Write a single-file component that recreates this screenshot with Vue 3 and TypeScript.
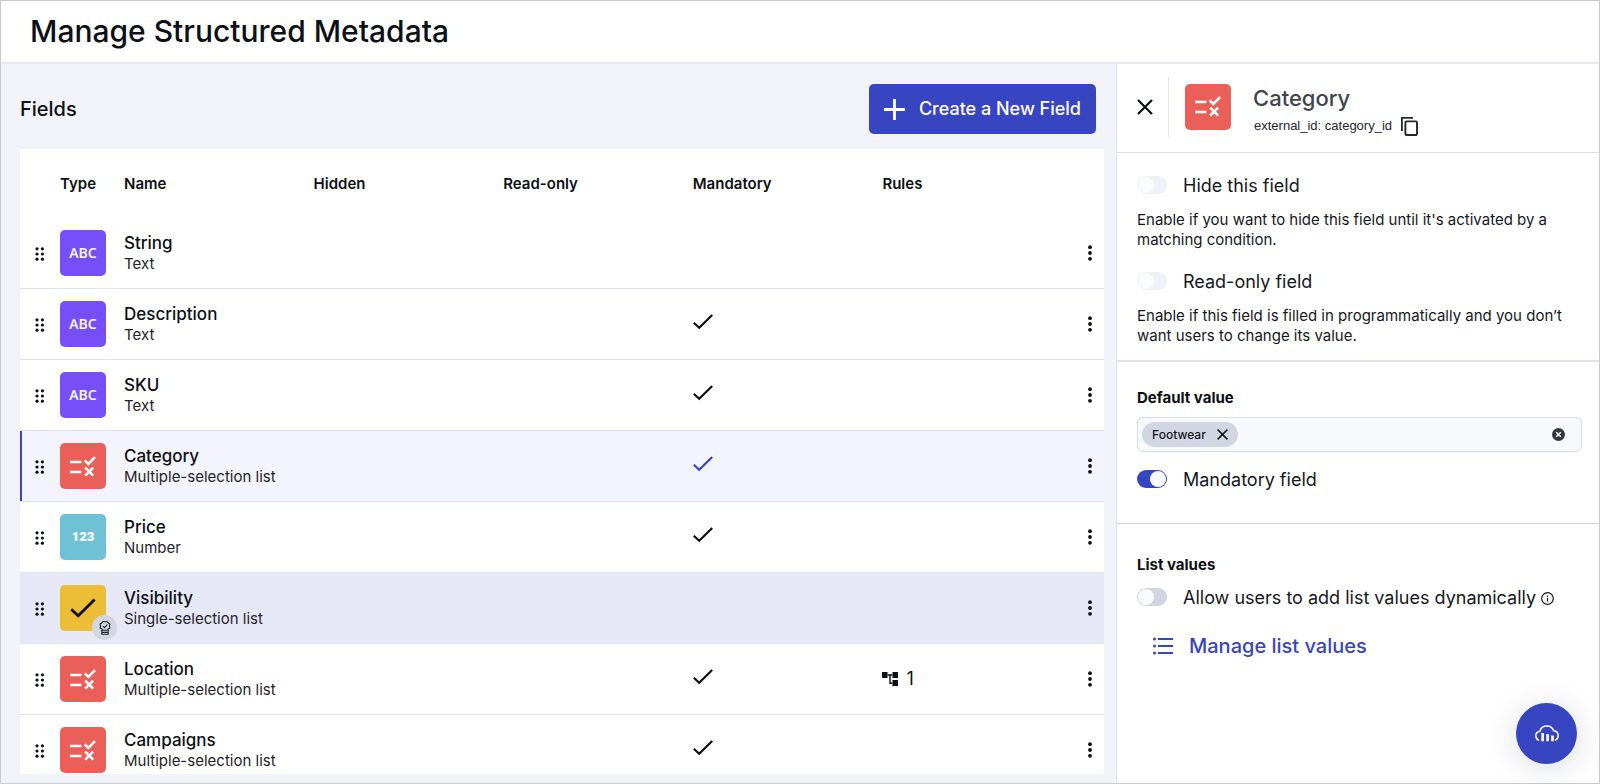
<script setup lang="ts">
import { ref } from 'vue'

type FieldKind = 'text' | 'multi' | 'number' | 'single'

interface MetadataField {
  name: string
  kind: FieldKind
  mandatory?: boolean
  rules?: number
  state?: 'selected' | 'hovered'
}

const kindLabels: Record<FieldKind, string> = {
  text: 'Text',
  multi: 'Multiple-selection list',
  number: 'Number',
  single: 'Single-selection list',
}

const fields: MetadataField[] = [
  { name: 'String', kind: 'text' },
  { name: 'Description', kind: 'text', mandatory: true },
  { name: 'SKU', kind: 'text', mandatory: true },
  { name: 'Category', kind: 'multi', mandatory: true, state: 'selected' },
  { name: 'Price', kind: 'number', mandatory: true },
  { name: 'Visibility', kind: 'single', state: 'hovered' },
  { name: 'Location', kind: 'multi', mandatory: true, rules: 1 },
  { name: 'Campaigns', kind: 'multi', mandatory: true },
]

const hidden = ref(false)
const readOnly = ref(false)
const mandatory = ref(true)
const dynamicValues = ref(false)
const query = ref('')
</script>

<template>
  <div class="app">
    <header class="top">
      <h1>Manage Structured Metadata</h1>
    </header>

    <div class="body">
      <main class="main">
        <div class="toolbar">
          <h2>Fields</h2>
          <button type="button" class="create">
            <svg width="21" height="21" viewBox="0 0 21 21" aria-hidden="true">
              <path d="M10.5 0v21M0 10.5h21" stroke="currentColor" stroke-width="2.8" />
            </svg>
            <span>Create a New Field</span>
          </button>
        </div>

        <div class="table-wrap">
          <table>
            <colgroup>
              <col class="col-drag" />
              <col class="col-type" />
              <col span="5" />
              <col class="col-menu" />
            </colgroup>
            <thead>
              <tr>
                <td></td>
                <th scope="col">Type</th>
                <th scope="col">Name</th>
                <th scope="col">Hidden</th>
                <th scope="col">Read-only</th>
                <th scope="col">Mandatory</th>
                <th scope="col">Rules</th>
                <td></td>
              </tr>
            </thead>
            <tbody>
              <tr v-for="field in fields" :key="field.name" :class="field.state">
                <td class="drag-cell">
                  <button type="button" class="drag" :aria-label="`Reorder ${field.name}`">
                    <svg width="10" height="14" viewBox="0 0 10 14" fill="currentColor">
                      <circle cx="2" cy="1.8" r="1.6" /><circle cx="7.4" cy="1.8" r="1.6" />
                      <circle cx="2" cy="7" r="1.6" /><circle cx="7.4" cy="7" r="1.6" />
                      <circle cx="2" cy="12.2" r="1.6" /><circle cx="7.4" cy="12.2" r="1.6" />
                    </svg>
                  </button>
                </td>
                <td>
                  <div class="tile" :class="field.kind">
                    <span v-if="field.kind === 'text'">ABC</span>
                    <span v-else-if="field.kind === 'number'">123</span>
                    <svg v-else-if="field.kind === 'multi'" width="26" height="21" viewBox="0 0 26 21" aria-hidden="true">
                      <path d="M0 6h11.4M0 16h11.4" stroke="#fff" stroke-width="2.6" fill="none" />
                      <path d="M14.7 4.4l3.6 3.6L25 1.2M15.2 11.7l8 8M23.2 11.7l-8 8" stroke="#fff" stroke-width="2.6" fill="none" />
                    </svg>
                    <svg v-else width="26" height="20" viewBox="0 0 26 20" aria-hidden="true">
                      <path d="M1.2 11.2l7 6.6L24.6 1.4" stroke="#0c1015" stroke-width="2.8" fill="none" />
                    </svg>
                    <span v-if="field.kind === 'single'" class="badge">
                      <svg width="12" height="14" viewBox="0 0 12 14" fill="none" stroke="#1f2429" stroke-width="1.1" aria-hidden="true">
                        <path d="M3.7.7h4.6l1 1.3 1.6 1-.5 2 .5 2-1.6 1-1 1.2H3.7l-1-1.2-1.6-1 .5-2-.5-2 1.6-1z" />
                        <path d="M4 5.2l1.5 1.5 2.9-3M2.8 9v4.3h6.4V9M2.8 11.4h6.4" />
                      </svg>
                    </span>
                  </div>
                </td>
                <td>
                  <div class="name">{{ field.name }}</div>
                  <div class="kind">{{ kindLabels[field.kind] }}</div>
                </td>
                <td></td>
                <td></td>
                <td>
                  <svg v-if="field.mandatory" class="check" width="20" height="16" viewBox="0 0 20 16" role="img" aria-label="Mandatory">
                    <path d="M.8 8.8l5.4 5L19.2 1" stroke="currentColor" stroke-width="2.2" fill="none" />
                  </svg>
                </td>
                <td>
                  <div v-if="field.rules" class="rules">
                    <svg width="16" height="16" viewBox="0 0 16 16" aria-hidden="true">
                      <path d="M0 1h5.5v6H0zM10.5 1H16v6h-5.5zM10.5 9H16v6h-5.5z" fill="currentColor" />
                      <path d="M5.5 4h5M8 4v8.2h2.5" stroke="currentColor" stroke-width="1.4" fill="none" />
                    </svg>
                    <span>{{ field.rules }}</span>
                  </div>
                </td>
                <td>
                  <button type="button" class="menu" :aria-label="`Actions for ${field.name}`">
                    <svg width="4" height="16" viewBox="0 0 4 16" fill="currentColor">
                      <circle cx="2" cy="2.2" r="1.9" /><circle cx="2" cy="8" r="1.9" /><circle cx="2" cy="13.8" r="1.9" />
                    </svg>
                  </button>
                </td>
              </tr>
            </tbody>
          </table>
        </div>
      </main>

      <aside class="panel">
        <div class="panel-head">
          <button type="button" class="close" aria-label="Close">
            <svg width="16" height="16" viewBox="0 0 16 16">
              <path d="M1 1l14 14M15 1L1 15" stroke="currentColor" stroke-width="2.2" />
            </svg>
          </button>
          <div class="divider"></div>
          <div class="tile multi">
            <svg width="26" height="21" viewBox="0 0 26 21" aria-hidden="true">
              <path d="M0 6h11.4M0 16h11.4" stroke="#fff" stroke-width="2.6" fill="none" />
              <path d="M14.7 4.4l3.6 3.6L25 1.2M15.2 11.7l8 8M23.2 11.7l-8 8" stroke="#fff" stroke-width="2.6" fill="none" />
            </svg>
          </div>
          <div class="heading">
            <h2>Category</h2>
            <div class="ext">
              <span>external_id: category_id</span>
              <button type="button" aria-label="Copy external ID">
                <svg width="17" height="19" viewBox="0 0 17 19" fill="none" stroke="currentColor">
                  <path d="M.9 14V.9H12" stroke-width="1.8" />
                  <rect x="4.4" y="4.4" width="11.6" height="13.6" rx="1" stroke-width="1.9" />
                </svg>
              </button>
            </div>
          </div>
        </div>

        <section class="visibility">
          <label class="toggle">
            <input v-model="hidden" type="checkbox" role="switch" class="faint" />
            <span>Hide this field</span>
          </label>
          <p>Enable if you want to hide this field until it's activated by a matching condition.</p>
          <label class="toggle">
            <input v-model="readOnly" type="checkbox" role="switch" class="faint" />
            <span>Read-only field</span>
          </label>
          <p>Enable if this field is filled in programmatically and you don’t want users to change its value.</p>
        </section>

        <section class="default-value">
          <h3><label for="default-value">Default value</label></h3>
          <div class="tags">
            <span class="chip">
              Footwear
              <button type="button" aria-label="Remove Footwear">
                <svg width="11" height="11" viewBox="0 0 11 11">
                  <path d="M.6.6l9.8 9.8M10.4.6L.6 10.4" stroke="currentColor" stroke-width="1.5" />
                </svg>
              </button>
            </span>
            <input id="default-value" v-model="query" type="text" />
            <button type="button" aria-label="Clear all">
              <svg width="13" height="13" viewBox="0 0 13 13">
                <circle cx="6.5" cy="6.5" r="6.5" fill="#33373f" />
                <path d="M4.2 4.2l4.6 4.6M8.8 4.2L4.2 8.8" stroke="#fff" stroke-width="1.5" />
              </svg>
            </button>
          </div>
          <label class="toggle">
            <input v-model="mandatory" type="checkbox" role="switch" />
            <span>Mandatory field</span>
          </label>
        </section>

        <section class="list-values">
          <h3>List values</h3>
          <div class="dynamic">
            <label class="toggle">
              <input v-model="dynamicValues" type="checkbox" role="switch" />
              <span>Allow users to add list values dynamically</span>
            </label>
            <svg width="13" height="13" viewBox="0 0 13 13" role="img" aria-label="More information">
              <circle cx="6.5" cy="6.5" r="5.8" fill="none" stroke="currentColor" stroke-width="1.2" />
              <path d="M6.5 5.8v3.8M6.5 3.4v1.3" stroke="currentColor" stroke-width="1.2" />
            </svg>
          </div>
          <button type="button" class="manage">
            <svg width="20" height="18" viewBox="0 0 20 18" fill="currentColor" aria-hidden="true">
              <circle cx="1.5" cy="2" r="1.5" /><circle cx="1.5" cy="9" r="1.5" /><circle cx="1.5" cy="16" r="1.5" />
              <path d="M5 1h15v2H5zM5 8h15v2H5zM5 15h15v2H5z" />
            </svg>
            <span>Manage list values</span>
          </button>
        </section>
      </aside>
    </div>

    <button type="button" class="fab" aria-label="Help">
      <svg width="24" height="17" viewBox="0 0 24 17" fill="none">
        <path d="M4 15.400C1.600 14.400.8 12.600.8 10.800c0-2.300 1.700-4.100 4-4.500C5.700 3 8.500.9 11.800.9c3.200 0 5.800 1.900 6.900 4.800 2.700.3 4.500 2.400 4.500 4.900 0 2.300-1.200 4-3.200 4.800" stroke="#fff" stroke-width="1.5" />
        <path d="M5.8 8h3.2v8.2H6.4V9zM10.7 9.200h3.200v7h-2.600v-6zM15.600 10.600h3.200v5.600h-2.600v-4.600z" fill="#fff" />
      </svg>
    </button>
  </div>
</template>

<style>
body {
  margin: 0;
}
</style>

<style scoped>
*,
*::before {
  box-sizing: border-box;
}

.app {
  display: flex;
  flex-direction: column;
  height: 100vh;
  border: 1px solid #cbcbce;
  background: #fff;
  color: #0c1015;
  font-family: Inter, "Liberation Sans", sans-serif;
  font-size: 15px;
  line-height: 20px;
}

h1,
h2,
h3,
p {
  margin: 0;
}

button {
  display: inline-flex;
  align-items: center;
  justify-content: center;
  padding: 0;
  border: 0;
  background: none;
  color: inherit;
  font: inherit;
  cursor: pointer;
}

svg {
  display: block;
  flex: none;
}

.top {
  flex: none;
  padding: 10px 29px 11px;
  border-bottom: 2px solid #e7e8f0;
}

.top h1 {
  font-size: 30px;
  font-weight: 500;
  line-height: 40px;
}

.body {
  display: grid;
  grid-template-columns: minmax(0, 1fr) 483px;
  flex: 1;
  min-height: 0;
}

.main {
  display: flex;
  flex-direction: column;
  min-height: 0;
  padding: 0 12px 9px 19px;
  background: #f2f3f8;
}

.toolbar {
  display: flex;
  flex: none;
  align-items: center;
  justify-content: space-between;
  padding: 20px 8px 15px 0;
}

.toolbar h2 {
  font-size: 20px;
  font-weight: 500;
}

.create {
  gap: 14px;
  height: 50px;
  padding: 0 15px;
  border-radius: 5px;
  background: #3845c0;
  color: #fff;
  font-size: 18px;
  font-weight: 500;
}

.table-wrap {
  flex: 1;
  min-height: 0;
  overflow: hidden;
  background: #fff;
}

table {
  width: 100%;
  border-spacing: 0;
  table-layout: fixed;
}

.col-drag {
  width: 40px;
}

.col-type {
  width: 64px;
}

.col-menu {
  width: 32px;
}

th {
  height: 69px;
  padding: 0;
  font-size: 15px;
  font-weight: 600;
  text-align: left;
}

tbody td {
  height: 71px;
  padding: 0;
  border-bottom: 1px solid #e1e3ec;
}

.selected td {
  background: #f3f4fd;
}

.selected .check {
  color: #3845c0;
}

.selected .drag-cell {
  box-shadow: inset 2px 0 #3845c0;
}

.hovered td {
  background: #e6e8f6;
}

tbody .drag-cell {
  padding-left: 15px;
}

.drag {
  vertical-align: middle;
}

.tile {
  position: relative;
  display: flex;
  flex: none;
  align-items: center;
  justify-content: center;
  width: 46px;
  height: 46px;
  border-radius: 5px;
  color: #fff;
  font-family: "Open Sans", "Noto Sans", sans-serif;
  font-size: 14px;
  font-weight: 600;
}

.text {
  background: #774ff8;
}

.multi {
  background: #ea5f58;
}

.number {
  background: #6fc1d6;
  font-family: Roboto, sans-serif;
  font-size: 13px;
  font-weight: 900;
}

.single {
  background: #ecbe38;
}

.badge {
  position: absolute;
  right: -11px;
  bottom: -9px;
  display: flex;
  align-items: center;
  justify-content: center;
  width: 25px;
  height: 25px;
  border-radius: 50%;
  background: #d2d6e1;
}

.name {
  font-size: 17px;
  font-weight: 500;
  line-height: 22px;
}

.kind {
  color: #1f2328;
  font-size: 15px;
  line-height: 20px;
}

.check {
  margin-bottom: 4px;
}

.rules {
  display: flex;
  align-items: center;
  gap: 8px;
  font-size: 18px;
}

.menu {
  width: 36px;
  height: 32px;
}

.panel {
  min-height: 0;
  border-left: 1px solid #dfe0ea;
}

.panel-head {
  display: flex;
  align-items: center;
  height: 89px;
  padding: 0 20px 3px;
  border-bottom: 1px solid #dadce8;
}

.close {
  width: 16px;
  height: 32px;
}

.divider {
  width: 1px;
  height: 60px;
  margin: 0 16px 0 15px;
  background: #e4e5ee;
}

.heading {
  margin-left: 22px;
  padding-top: 9px;
}

.heading h2 {
  color: #41454c;
  font-size: 22px;
  font-weight: 500;
  line-height: 28px;
}

.ext {
  display: flex;
  align-items: center;
  gap: 9px;
  height: 24px;
  margin-top: 2px;
  padding-left: 1px;
  color: #24282e;
  font-family: "Liberation Sans", Arial, sans-serif;
  font-size: 13px;
}

section {
  padding: 0 17px 0 20px;
  color: #14181d;
}

.visibility {
  padding-top: 21px;
  padding-bottom: 14px;
  border-bottom: 2px solid #dfe1ec;
}

.visibility p {
  margin-top: 12px;
  font-size: 15px;
  line-height: 20px;
}

.visibility p + .toggle {
  margin-top: 20px;
}

.toggle {
  display: flex;
  align-items: center;
  gap: 16px;
  font-size: 18px;
  line-height: 24px;
}

.toggle input {
  flex: none;
  appearance: none;
  width: 30px;
  height: 18px;
  margin: 0 0 2px;
  padding: 1px;
  border-radius: 9px;
  background: #d2d6e3;
}

.toggle input::before {
  display: block;
  width: 16px;
  height: 16px;
  border-radius: 50%;
  background: #fafbff;
  content: "";
}

.toggle input:checked {
  padding-left: 13px;
  background: #3845c0;
}

.toggle .faint {
  background: #f0f1f6;
}

.default-value {
  padding-top: 26px;
  padding-bottom: 31px;
  border-bottom: 1px solid #ced4e2;
}

h3 {
  color: #0c1015;
  font-size: 15px;
  font-weight: 700;
  line-height: 20px;
}

.tags {
  display: flex;
  align-items: center;
  height: 35px;
  margin: 9px 0 16px;
  padding: 0 16px 0 4px;
  border: 1px solid #d7dbe6;
  border-radius: 6px;
  background: #f8f9fc;
}

.chip {
  display: flex;
  align-items: center;
  gap: 11px;
  height: 25px;
  padding: 0 10px;
  border-radius: 13px;
  background: #d2d6e2;
  font-size: 12px;
  font-weight: 500;
}

.tags input {
  flex: 1;
  min-width: 0;
  border: 0;
  outline: 0;
  background: transparent;
  font: inherit;
}

.list-values {
  padding-top: 31px;
}

.dynamic {
  display: flex;
  align-items: center;
  gap: 5px;
  margin-top: 11px;
}

.manage {
  gap: 16px;
  margin: 24px 0 0 16px;
  color: #3845c0;
  font-size: 20px;
  font-weight: 500;
  line-height: 24px;
}

.fab {
  position: fixed;
  right: 23px;
  bottom: 20px;
  width: 61px;
  height: 61px;
  border-radius: 50%;
  background: #3845c0;
  box-shadow: 0 4px 32px rgba(20, 30, 60, 0.16);
}
</style>
